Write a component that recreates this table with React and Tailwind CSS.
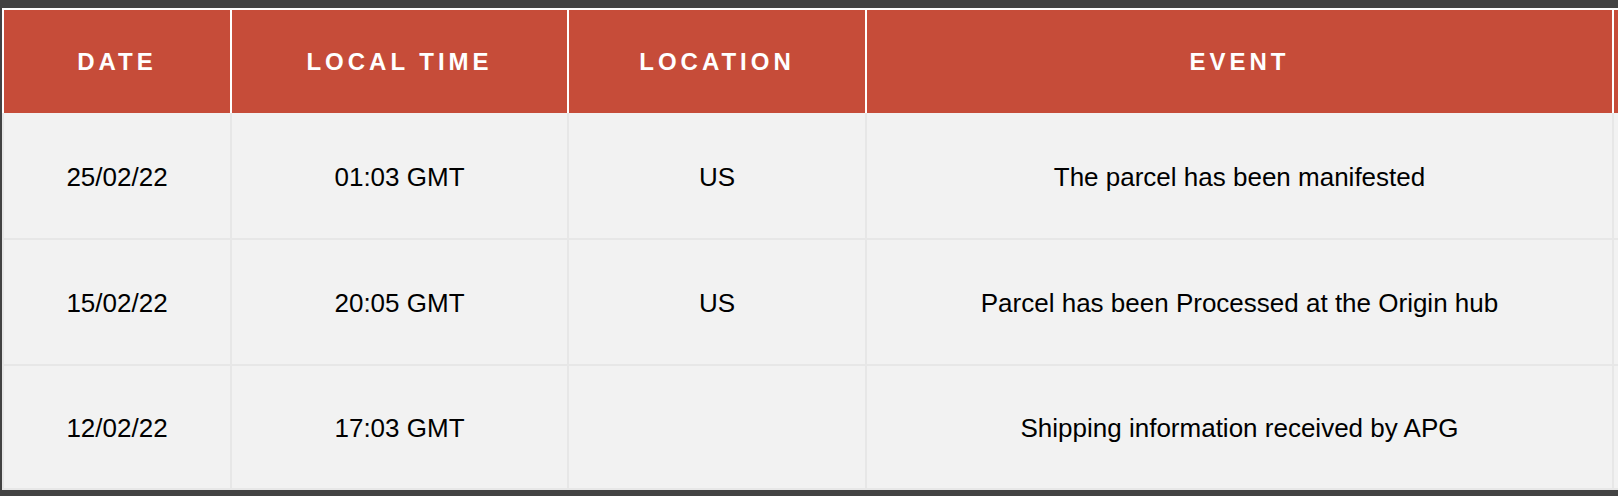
import React from 'react';

const columns = [
    { label: 'Date', width: 'w-[226px]' },
    { label: 'Local Time', width: 'w-[335px]' },
    { label: 'Location', width: 'w-[296px]' },
    { label: 'Event', width: 'w-[745px]' },
    { label: 'Signed By', width: 'w-[220px]' },
];

const events = [
    { date: '25/02/22', time: '01:03 GMT', location: 'US', event: 'The parcel has been manifested', height: 'h-[125px]' },
    { date: '15/02/22', time: '20:05 GMT', location: 'US', event: 'Parcel has been Processed at the Origin hub', height: 'h-[124px]' },
    { date: '12/02/22', time: '17:03 GMT', location: '', event: 'Shipping information received by APG', height: 'h-[122px]' },
];

const App = () => {
    return (
        <div className="w-full h-[496px] bg-[#434343] overflow-hidden pt-[8px] pl-[2px] font-['Liberation_Sans',Arial,sans-serif]">
            <div className="w-max">
                {/* header */}
                <div className="flex gap-x-[2px] bg-white px-[2px] pt-[2px]">
                    {columns.map((col) => (
                        <div
                            key={col.label}
                            className={`${col.width} h-[103px] shrink-0 bg-[#c64c39] flex items-center justify-center text-white text-[24px] font-bold uppercase tracking-[4px]`}
                        >
                            {col.label === 'Signed By' ? '' : col.label}
                        </div>
                    ))}
                </div>

                {/* rows */}
                <div className="flex flex-col gap-y-[2px] bg-[#e7e7e7] px-[2px] pb-[2px]">
                    {events.map((row, i) => {
                        const cells = [row.date, row.time, row.location, row.event, ''];
                        return (
                            <div key={i} className="flex gap-x-[2px]">
                                {cells.map((text, j) => (
                                    <div
                                        key={j}
                                        className={`${columns[j].width} ${row.height} shrink-0 bg-[#f2f2f2] flex items-center justify-center text-black text-[26px] pt-[3px]`}
                                    >
                                        {text}
                                    </div>
                                ))}
                            </div>
                        );
                    })}
                </div>
            </div>
        </div>
    );
};

export default App;
